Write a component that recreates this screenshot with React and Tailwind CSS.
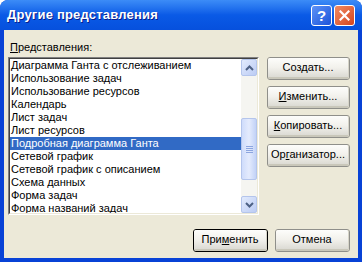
import React from "react";

const items = [
  "Диаграмма Ганта с отслеживанием",
  "Использование задач",
  "Использование ресурсов",
  "Календарь",
  "Лист задач",
  "Лист ресурсов",
  "Подробная диаграмма Ганта",
  "Сетевой график",
  "Сетевой график с описанием",
  "Схема данных",
  "Форма задач",
  "Форма названий задач",
];

const font = { fontFamily: '"Liberation Sans", Arial, sans-serif' };

// XP-style push button, mnemonic letter split into before/key/after
const XpButton = ({ before = "", hot = "", after = "", def = false, className = "" }) => (
  <div
    className={
      "h-[23px] flex items-center justify-center rounded-[3px] text-[11px] text-black " +
      (def
        ? "border border-black "
        : "border border-[#8f8f8a] ") +
      className
    }
  >
    <div className="w-full h-full rounded-[2px] flex items-center justify-center bg-gradient-to-b from-[#fdfdfb] via-[#f2f1ec] to-[#dcdbd4] border-b-2 border-r border-b-[#c9c7ba] border-r-[#d6d4c8]">
      <span>
        {before}
        <span className="underline underline-offset-[1px]">{hot}</span>
        {after}
      </span>
    </div>
  </div>
);

const Chevron = ({ up }) => (
  <svg width="9" height="6" viewBox="0 0 9 6">
    <path
      d={up ? "M1 5 L4.5 1.5 L8 5" : "M1 1 L4.5 4.5 L8 1"}
      fill="none"
      stroke="#4d6185"
      strokeWidth="2"
    />
  </svg>
);

const ScrollArrow = ({ up }) => (
  <div className="h-[17px] w-[16px] flex items-center justify-center rounded-[2px] border border-[#b4c5ec] bg-gradient-to-br from-[#e2ebfd] to-[#bcccf4]">
    <Chevron up={up} />
  </div>
);

export default function App() {
  return (
    <div className="w-[362px] h-[262px] bg-white" style={font}>
      <div className="w-[362px] h-[262px] flex flex-col rounded-t-[8px] overflow-hidden bg-[#0842d6]">
        {/* title bar */}
        <div className="h-[30px] shrink-0 flex items-center pl-[7px] pr-[7px] bg-gradient-to-b from-[#3c8cf7] via-[#0a5ae6] to-[#0650dd]">
          <span className="text-white font-bold text-[13px] tracking-[0.2px] [text-shadow:1px_1px_0_#0a1e8c]">
            Другие представления
          </span>
          <div className="ml-auto flex gap-[2px]">
            <div className="w-[21px] h-[21px] rounded-[3px] border border-white bg-gradient-to-br from-[#5d93f7] to-[#1c51d9] flex items-center justify-center text-white font-bold text-[15px] leading-none">
              ?
            </div>
            <div className="w-[21px] h-[21px] rounded-[3px] border border-white bg-gradient-to-br from-[#f08a62] to-[#d4431b] flex items-center justify-center">
              <svg width="11" height="11" viewBox="0 0 11 11">
                <path d="M1.5 1.5 L9.5 9.5 M9.5 1.5 L1.5 9.5" stroke="#fff" strokeWidth="2.2" strokeLinecap="square" />
              </svg>
            </div>
          </div>
        </div>

        {/* client area */}
        <div className="flex-1 mx-[4px] mb-[4px] bg-[#ece9d8] flex flex-col">
          <div className="pl-[6px] pt-[12px] h-[27px] text-[11px] text-black leading-none">
            <span className="underline underline-offset-[1px]">П</span>редставления:
          </div>

          <div className="flex ml-[4px]">
            {/* list box */}
            <div className="w-[251px] h-[158px] flex border-t border-l border-t-[#808080] border-l-[#808080] border-b border-r border-b-white border-r-white">
              <div className="flex-1 flex border-t border-l border-t-[#404040] border-l-[#404040] border-b border-r border-b-[#ece9d8] border-r-[#ece9d8] bg-white">
                <div className="flex-1 flex flex-col text-[11px] text-black overflow-hidden">
                  {items.map((it) => (
                    <div
                      key={it}
                      className={
                        "h-[13px] leading-[13px] pl-[1px] whitespace-nowrap " +
                        (it === "Подробная диаграмма Ганта" ? "bg-[#316ac5] text-white" : "")
                      }
                    >
                      {it}
                    </div>
                  ))}
                </div>
                {/* scrollbar */}
                <div className="w-[16px] flex flex-col bg-[#f5f5f1]">
                  <ScrollArrow up />
                  <div className="h-[42px]" />
                  <div className="h-[62px] rounded-[2px] border border-[#b4c5ec] bg-gradient-to-r from-[#cfdcfb] via-[#e4ebfd] to-[#c2d2f7] flex flex-col items-center justify-center gap-[1px]">
                    <div className="w-[7px] h-px bg-[#8ca5df]" />
                    <div className="w-[7px] h-px bg-[#8ca5df]" />
                    <div className="w-[7px] h-px bg-[#8ca5df]" />
                    <div className="w-[7px] h-px bg-[#8ca5df]" />
                  </div>
                  <div className="flex-1" />
                  <ScrollArrow />
                </div>
              </div>
            </div>

            {/* side buttons */}
            <div className="ml-[8px] w-[83px] flex flex-col gap-[6px]">
              <XpButton before="Соз" hot="д" after="ать..." />
              <XpButton hot="И" after="зменить..." />
              <XpButton hot="К" after="опировать..." />
              <XpButton before="Ор" hot="г" after="анизатор..." />
            </div>
          </div>

          <div className="flex justify-end gap-[7px] mt-[14px] pr-[8px]">
            <XpButton def before="При" hot="м" after="енить" className="w-[75px]" />
            <XpButton after="Отмена" className="w-[75px]" />
          </div>
        </div>
      </div>
    </div>
  );
}
